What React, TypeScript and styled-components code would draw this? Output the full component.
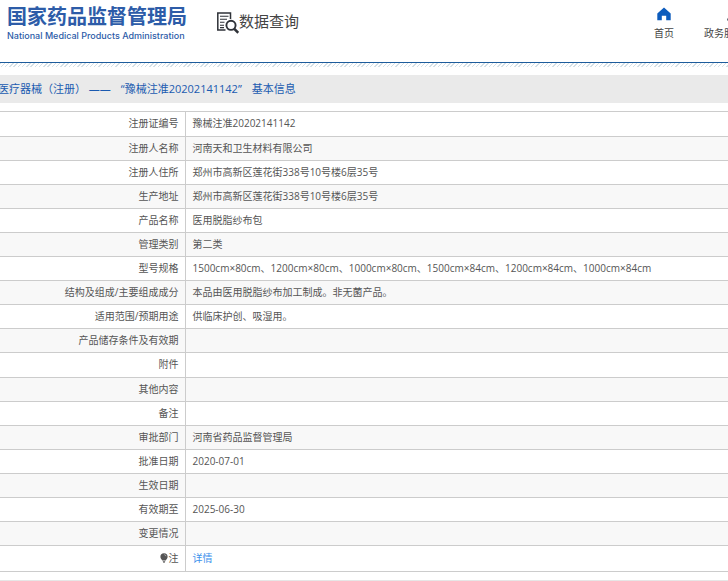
import React from 'react'
import styled, { createGlobalStyle } from 'styled-components'

interface IRecord {
  label: string
  value?: string
  href?: string
  hint?: boolean
}

const records: IRecord[] = [
  { label: '注册证编号', value: '豫械注准20202141142' },
  { label: '注册人名称', value: '河南天和卫生材料有限公司' },
  { label: '注册人住所', value: '郑州市高新区莲花街338号10号楼6层35号' },
  { label: '生产地址', value: '郑州市高新区莲花街338号10号楼6层35号' },
  { label: '产品名称', value: '医用脱脂纱布包' },
  { label: '管理类别', value: '第二类' },
  {
    label: '型号规格',
    value:
      '1500cm×80cm、1200cm×80cm、1000cm×80cm、1500cm×84cm、1200cm×84cm、1000cm×84cm'
  },
  {
    label: '结构及组成/主要组成成分',
    value: '本品由医用脱脂纱布加工制成。非无菌产品。'
  },
  { label: '适用范围/预期用途', value: '供临床护创、吸湿用。' },
  { label: '产品储存条件及有效期' },
  { label: '附件' },
  { label: '其他内容' },
  { label: '备注' },
  { label: '审批部门', value: '河南省药品监督管理局' },
  { label: '批准日期', value: '2020-07-01' },
  { label: '生效日期' },
  { label: '有效期至', value: '2025-06-30' },
  { label: '变更情况' },
  { label: '注', value: '详情', href: '#detail', hint: true }
]

const SearchDocIcon = () => (
  <svg width="22" height="22" viewBox="0 0 22 22" fill="none" aria-hidden="true">
    <path d="M8.5 18H0.8V1H13.5v6" stroke="#2f3238" strokeWidth="1.5" />
    <path
      d="M3 4.3h8.5M3 7.3h7M3 10.3h4.5M3 13.3h4M3 15.6h4"
      stroke="#2f3238"
      strokeWidth="1.1"
    />
    <circle cx="14" cy="13.3" r="4.6" stroke="#2f3238" strokeWidth="1.9" />
    <path d="M17.3 16.8l4 4" stroke="#2f3238" strokeWidth="2.6" />
  </svg>
)

const HomeIcon = () => (
  <svg width="14" height="14" viewBox="0 0 14 14" aria-hidden="true">
    <path d="M7 0.4L0.3 6.5V13.3H4.8V8.8H9.2V13.3H13.7V6.5z" fill="#0d5cbd" />
  </svg>
)

const ServiceIcon = () => (
  <svg width="14" height="14" viewBox="0 0 14 14" aria-hidden="true">
    <path d="M10 13.5c0-2.500 1.500-4 4-4v4z" fill="#4b5563" />
  </svg>
)

const HintIcon = () => (
  <svg width="8" height="10" viewBox="0 0 8 10" aria-hidden="true">
    <path
      d="M4 0.3a3.6 3.6 0 0 1 3.6 3.6C7.6 5.6 6.2 6.3 5.7 7.4H2.3C1.8 6.3 0.4 5.6 0.4 3.9A3.6 3.6 0 0 1 4 0.3z"
      fill="#555"
    />
    <path d="M2.7 8.2h2.6L4.6 9.7H3.4z" fill="#555" />
    <path d="M4.3 1.6a2 2 0 0 1 1.7 1.6" stroke="#ccc" strokeWidth="0.7" fill="none" />
  </svg>
)

const App: React.FC = () => (
  <>
    <GlobalStyle />
    <Header>
      <Logo href="#home">
        <LogoName>国家药品监督管理局</LogoName>
        <LogoSub>National Medical Products Administration</LogoSub>
      </Logo>
      <Section>
        <SearchDocIcon />
        <SectionName>数据查询</SectionName>
      </Section>
      <Nav>
        <NavLink href="#home">
          <HomeIcon />
          首页
        </NavLink>
        <NavLink href="#service">
          <ServiceIcon />
          政务服务
        </NavLink>
      </Nav>
    </Header>
    <Hatch />
    <main>
      <Title>
        <span>医疗器械（注册） ——</span>
        <span>“豫械注准20202141142”</span>
        <span>基本信息</span>
      </Title>
      <Table>
        <tbody>
          {records.map(({ label, value, href, hint }) => (
            <Row key={label}>
              <LabelCell scope="row">
                {hint && <HintIcon />}
                {label}
              </LabelCell>
              <ValueCell>
                {href ? <DetailLink href={href}>{value}</DetailLink> : value}
              </ValueCell>
            </Row>
          ))}
        </tbody>
      </Table>
    </main>
    <Footer />
  </>
)

const GlobalStyle = createGlobalStyle`
  * {
    box-sizing: border-box;
  }

  body {
    margin: 0;
    overflow-x: hidden;
    background: #fff;
    color: #555;
    font-family: 'Open Sans', 'Noto Sans CJK SC', sans-serif;
    font-size: 10px;
    line-height: 16px;
  }

  a {
    text-decoration: none;
  }
`

const Header = styled.header`
  display: flex;
  align-items: flex-start;
  height: 63px;
  padding-left: 7px;
  border-bottom: 1px solid #1d5c9c;
  overflow: hidden;
`

const Logo = styled.a`
  display: flex;
  flex-direction: column;
  flex-shrink: 0;
  padding-top: 4px;
  color: #2d5ca8;
`

const LogoName = styled.span`
  font-family: 'Noto Sans CJK SC', sans-serif;
  font-size: 20px;
  font-weight: 700;
  line-height: 24px;
`

const LogoSub = styled.span`
  font-family: Inter, sans-serif;
  font-size: 9px;
  font-weight: 500;
  line-height: 16px;
`

const Section = styled.div`
  display: flex;
  align-items: flex-start;
  flex-shrink: 0;
  padding: 12px 0 0 30px;
`

const SectionName = styled.span`
  color: #444;
  font-size: 15px;
  line-height: 18px;
`

const Nav = styled.nav`
  display: flex;
  gap: 30px;
  margin: 7px -16px 0 auto;
`

const NavLink = styled.a`
  display: flex;
  flex-direction: column;
  align-items: center;
  gap: 4px;
  color: #444;
  white-space: nowrap;
`

const Hatch = styled.div`
  height: 4px;
  background: repeating-linear-gradient(
    135deg,
    #d5e0e6 0,
    #d5e0e6 1px,
    #fff 1px,
    #fff 3px
  );
`

const Title = styled.h1`
  display: flex;
  gap: 10px;
  margin: 8px 0;
  padding: 4px 0;
  background: #eaeaea;
  color: #1a5ab0;
  font-size: 11px;
  font-weight: 400;
  line-height: 20px;
  white-space: nowrap;

  & span:first-child {
    margin-left: -2px;
  }
`

const Table = styled.table`
  width: 100%;
  border-collapse: collapse;
  border-top: 1px solid #ccc;
`

const Row = styled.tr`
  height: 24px;
  border-bottom: 1px solid #ccc;

  &:nth-child(even) {
    background: #f8f8f8;
  }

  &:nth-child(10n + 1) {
    height: 25px;
  }

  &:last-child {
    height: 26px;
  }
`

const LabelCell = styled.th`
  width: 185px;
  padding: 0 6px 2px 0;
  border-right: 1px solid #ccc;
  font-weight: 400;
  text-align: right;

  & svg {
    margin-right: 1px;
    vertical-align: -1px;
  }
`

const ValueCell = styled.td`
  padding: 0 7px 2px;
`

const DetailLink = styled.a`
  color: #3d92ec;
`

const Footer = styled.footer`
  margin-top: 8px;
  border-top: 1px solid #e6e6e6;
`

export default App
